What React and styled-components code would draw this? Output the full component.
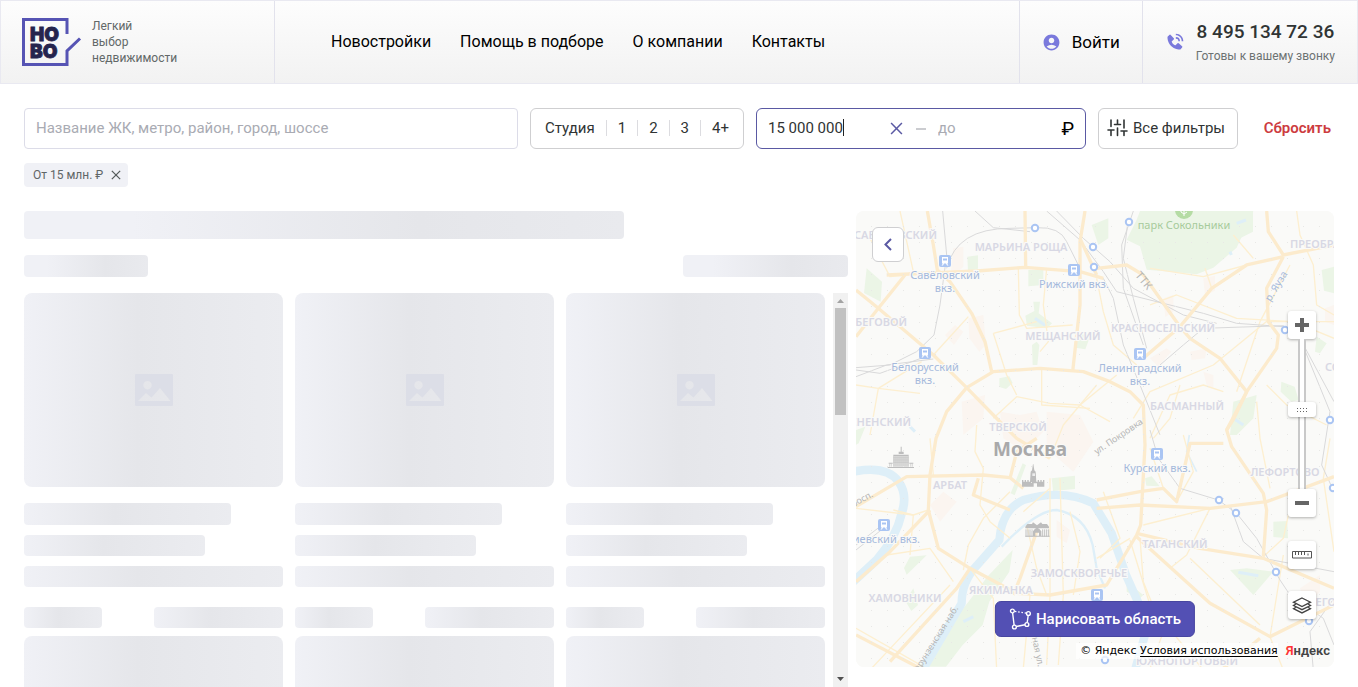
import React, { useState } from "react";
import styled, { createGlobalStyle, css } from "styled-components";
import { MdAccountCircle } from "react-icons/md";
import { BiSolidPhoneCall } from "react-icons/bi";

const Global = createGlobalStyle`
  *, *::before, *::after { box-sizing: border-box; }
  body { margin: 0; background: #fff; color: #303434; font-family: Roboto, "Noto Sans", sans-serif; }
  button, input { font: inherit; color: inherit; }
  button { cursor: pointer; }
`;

const Page = styled.div`
  height: 100vh;
  min-height: 560px;
  display: flex;
  flex-direction: column;
  overflow: hidden;
`;

/* ---------- Header ---------- */

const Header = styled.header`
  flex: none;
  display: flex;
  height: 84px;
  border: 1px solid #e9e9f1;
  background: linear-gradient(#fdfdfd, #f2f2f2);
`;

const Brand = styled.a`
  display: flex;
  align-items: center;
  gap: 10px;
  width: 274px;
  padding-left: 21px;
  border-right: 1px solid #e2e2ec;
  color: #626868;
  font-size: 12px;
  line-height: 16px;
  text-decoration: none;
  svg { flex: none; }
`;

const Nav = styled.nav`
  flex: 1;
  display: flex;
  align-items: center;
  gap: 29px;
  padding: 0 0 1px 56px;
`;

const NavLink = styled.a`
  color: #000;
  font-size: ${(p) => p.$size || 16}px;
  line-height: 20px;
  text-decoration: none;
  white-space: nowrap;
`;

const HeaderCell = styled.div`
  display: flex;
  align-items: center;
  gap: 11px;
  padding: 0 22px;
  border-left: 1px solid #e2e2ec;
  white-space: nowrap;
  svg { flex: none; color: #7a79dc; }
`;

const Phone = styled.div`
  display: flex;
  flex-direction: column;
  align-items: center;
  gap: 5px;
`;

const PhoneNumber = styled.a`
  color: #303434;
  font-size: 19px;
  font-weight: 500;
  line-height: 22px;
  text-decoration: none;
`;

const PhoneNote = styled.span`
  color: #6c7272;
  font-size: 12px;
  line-height: 16px;
`;

/* ---------- Filters ---------- */

const Filters = styled.form`
  flex: none;
  display: flex;
  gap: 12px;
  padding: 24px 24px 0;
  font-size: 15px;
`;

const box = css`
  height: 41px;
  border: 1px solid #cfcfd1;
  border-radius: 6px;
  background: #fff;
`;

const Search = styled.input`
  ${box}
  flex: 1;
  min-width: 120px;
  padding: 0 11px 2px;
  border-color: #dcdce8;
  border-radius: 4px;
  outline: none;
  &::placeholder { color: #a9abb3; opacity: 1; }
`;

const Rooms = styled.fieldset`
  ${box}
  display: flex;
  align-items: center;
  margin: 0;
  padding: 0 3px 2px;
`;

const Room = styled.label`
  padding: 0 11px;
  line-height: 16px;
  cursor: pointer;
  & + & { border-left: 1px solid #dcdce0; }
  input { position: absolute; opacity: 0; width: 1px; height: 1px; }
`;

const Price = styled.div`
  ${box}
  display: flex;
  align-items: center;
  width: 330px;
  padding: 0 11px;
  border-color: #5a59a3;
`;

const FromField = styled.div`
  display: flex;
  align-items: center;
  width: 122px;
  padding-bottom: 2px;
`;

const FromInput = styled.input`
  field-sizing: content;
  padding: 0;
  border: 0;
  outline: none;
  background: none;
  max-width: 112px;
`;

const Caret = styled.span`
  width: 1px;
  height: 17px;
  background: #222;
`;

const ToInput = styled.input`
  flex: 1;
  min-width: 0;
  padding: 0 0 2px;
  border: 0;
  outline: none;
  background: none;
  &::placeholder { color: #a9abb3; opacity: 1; }
`;

const IconButton = styled.button`
  display: flex;
  padding: 0;
  border: 0;
  background: none;
  color: ${(p) => p.$color};
`;

const Dash = styled.span`
  width: 10px;
  height: 2px;
  margin: 0 12px 0 13px;
  background: #cbccd0;
`;

const Ruble = styled.span`
  color: #000;
  font-size: 19px;
  line-height: 20px;
`;

const AllFilters = styled.button`
  ${box}
  display: flex;
  align-items: center;
  gap: 5px;
  width: 140px;
  padding: 0 8px 2px;
  white-space: nowrap;
`;

const Reset = styled.button`
  width: 84px;
  padding: 0 3px 2px;
  border: 0;
  background: none;
  color: #cd3c3f;
  font-weight: 600;
  text-align: right;
`;

const Chips = styled.div`
  flex: none;
  display: flex;
  padding: 14px 24px 0;
`;

const Chip = styled.span`
  display: flex;
  align-items: center;
  gap: 8px;
  height: 24px;
  padding: 0 7px 0 9px;
  border-radius: 4px;
  background: #f0f1f6;
  color: #606666;
  font-size: 12px;
  line-height: 16px;
`;

/* ---------- Results ---------- */

const Content = styled.main`
  flex: 1;
  min-height: 0;
  display: grid;
  grid-template-columns: minmax(0, 824fr) minmax(0, 478fr);
  gap: 8px;
  padding: 24px 24px 0;
`;

const Results = styled.section`
  display: flex;
  flex-direction: column;
  min-height: 0;
`;

const shades = {
  wide: "linear-gradient(90deg, #f0f1f6 18%, #e5e6ea 66%, #e9eaee)",
  card: "linear-gradient(90deg, #f0f1f6, #e5e6ea 44%, #ebecf0)",
};

const Bone = styled.div`
  flex: none;
  width: ${(p) => p.$w};
  height: ${(p) => p.$h}px;
  border-radius: 4px;
  background: ${(p) => shades[p.$shade || "card"]};
`;

const Toolbar = styled.div`
  display: flex;
  justify-content: space-between;
  margin: 16px 0;
`;

const Scroller = styled.div`
  flex: 1;
  min-height: 0;
  display: flex;
  gap: 8px;
`;

const Cards = styled.div`
  flex: 1;
  display: grid;
  grid-template-columns: repeat(3, minmax(0, 1fr));
  gap: 8px 12px;
  overflow-y: auto;
  scrollbar-width: none;
`;

const CardBox = styled.article`
  display: flex;
  flex-direction: column;
  gap: 10px;
`;

const Photo = styled.div`
  display: flex;
  align-items: center;
  justify-content: center;
  height: 194px;
  margin-bottom: 6px;
  border-radius: 8px;
  background: ${shades.card};
`;

const CardFooter = styled.div`
  display: flex;
  justify-content: space-between;
  margin-top: 10px;
`;

const Scrollbar = styled.div`
  display: flex;
  flex-direction: column;
  align-items: center;
  justify-content: space-between;
  width: 15px;
  background: #f1f1f1;
`;

const Arrow = styled.svg`
  display: block;
  width: 15px;
  height: 15px;
`;

const ThumbLane = styled.div`
  flex: 1;
  width: 11px;
  &::before {
    content: "";
    display: block;
    height: 107px;
    background: #c1c1c1;
  }
`;

/* ---------- Map ---------- */

const MapPane = styled.section`
  position: relative;
  margin-bottom: 20px;
  min-height: 0;
  overflow: hidden;
  border-radius: 8px;
  background: #fafaf8;
`;

const MapSvg = styled.svg`
  display: block;
  width: 100%;
  height: 100%;
`;

const Collapse = styled.button`
  position: absolute;
  top: 16px;
  left: 16px;
  display: flex;
  align-items: center;
  justify-content: center;
  width: 32px;
  height: 35px;
  padding: 0;
  border: 1px solid #cfcfd1;
  border-radius: 6px;
  background: #fff;
`;

const Controls = styled.div`
  position: absolute;
  top: 100px;
  right: 18px;
  display: flex;
  flex-direction: column;
  width: 28px;
`;

const MapButton = styled.button`
  display: flex;
  align-items: center;
  justify-content: center;
  width: 28px;
  height: 28px;
  margin-top: ${(p) => p.$top || 0}px;
  padding: 0;
  border: 0;
  border-radius: 3px;
  background: #fff;
  box-shadow: 0 1px 3px rgba(0, 0, 0, 0.3);
`;

const ZoomSlider = styled.input`
  appearance: none;
  writing-mode: vertical-lr;
  direction: rtl;
  width: 28px;
  height: 150px;
  margin: 0;
  background: linear-gradient(90deg, #c9c9c9 2px, #fff 2px, #fff 6px, #c9c9c9 6px) center / 8px 100% no-repeat;
  &::-webkit-slider-thumb {
    appearance: none;
    width: 28px;
    height: 15px;
    border-radius: 3px;
    background:
      repeating-linear-gradient(90deg, #666 0 1px, transparent 1px 3px) center 6px / 10px 1px no-repeat,
      repeating-linear-gradient(90deg, #666 0 1px, transparent 1px 3px) center 9px / 10px 1px no-repeat,
      #fff;
    box-shadow: 0 1px 3px rgba(0, 0, 0, 0.3);
  }
`;

const Draw = styled.button`
  position: absolute;
  bottom: 30px;
  left: 50%;
  transform: translateX(-50%);
  display: flex;
  align-items: center;
  gap: 4px;
  height: 36px;
  padding: 0 13px;
  border: 1px solid #4746a0;
  border-radius: 6px;
  background: #5350b4;
  color: #fff;
  font-size: 15px;
  font-weight: 500;
  white-space: nowrap;
`;

const Copyright = styled.div`
  position: absolute;
  right: 4px;
  bottom: 8px;
  display: flex;
  align-items: center;
  gap: 8px;
  color: #000;
  font: 11px/16px "DejaVu Sans", sans-serif;
  white-space: nowrap;
  a { color: #000; text-underline-offset: 2px; }
`;

const Terms = styled.span`
  padding-left: 4px;
  background: rgba(255, 255, 255, 0.7);
`;

const Yandex = styled.a`
  && { color: #444; }
  font: 600 13px/16px Roboto, sans-serif;
  text-decoration: none;
  b { color: #f33; font-weight: inherit; }
`;

/* ---------- Icons ---------- */

const Logo = () => (
  <svg width="60" height="48" viewBox="0 0 60 48" role="img" aria-label="НОВО">
    <g fill="none" stroke="#5654b4" strokeWidth="3">
      <path d="M45 16V1.500H1.500v45H45V33l13-12.500" />
    </g>
    <g fill="#25244d" stroke="#25244d" strokeWidth="0.800" fontFamily="Inter, sans-serif" fontWeight="900" fontSize="19">
      <text x="8" y="23">НО</text>
      <text x="8" y="40">ВО</text>
    </g>
  </svg>
);

const Cross = ({ size, width }) => (
  <svg width={size} height={size} viewBox="0 0 12 12" fill="none" stroke="currentColor" strokeWidth={width}>
    <path d="M1 1l10 10M11 1L1 11" />
  </svg>
);

const Sliders = () => (
  <svg width="21" height="18" viewBox="0 0 21 18" fill="none" stroke="#303434" strokeWidth="1.6" strokeLinecap="round">
    <path d="M4 1v6.5M1 11h6M4 11v5.5M10.5 1v4.5M7.5 5.5h6M10.5 9v7.500M17 1v8M14 12h6M17 12v4.500" />
  </svg>
);

const Picture = () => (
  <svg width="38" height="32" viewBox="0 0 38 32">
    <path
      fill="#dcdee7"
      fillRule="evenodd"
      d="M1 0h36a1 1 0 0 1 1 1v30a1 1 0 0 1-1 1H1a1 1 0 0 1-1-1V1a1 1 0 0 1 1-1zm2 27h32.500L25 14l-8.500 9.500L11 19zM12.500 7a4.200 4.200 0 1 0 .01 0z"
    />
  </svg>
);

const Polygon = () => (
  <svg width="23" height="22" viewBox="0 0 23 22" fill="none" stroke="#fff" strokeWidth="1.400">
    <circle cx="3.500" cy="3" r="1.900" />
    <circle cx="19.500" cy="5.500" r="1.900" />
    <circle cx="18" cy="16.500" r="1.900" />
    <circle cx="5.500" cy="19" r="1.900" />
    <path d="M3.700 5l1.500 12M19.300 7.500l-1 7M16 16.800l-8.500 1.700" />
    <path d="M6 3.400l11.500 1.800" strokeDasharray="1.500 1.800" />
  </svg>
);

const Ruler = () => (
  <svg width="20" height="8" viewBox="0 0 20 8" fill="none" stroke="#555" strokeWidth="1">
    <path d="M.5.5h19v6.500H.5zM3.500 1v3M6.500 1v3M9.500 1v3M12.500 1v3M16 2.500v2" />
  </svg>
);

const Layers = () => (
  <svg width="20" height="17" viewBox="0 0 20 17" fill="none" stroke="#444" strokeWidth="1.300">
    <path d="M10 1l8.500 4.200L10 9.500 1.500 5.200z" />
    <path d="M4 7L1.500 8.500 10 12.700l8.500-4.200L16 7M4 10.200l-2.500 1.500L10 15.900l8.500-4.200L16 10.200" />
  </svg>
);

/* ---------- Map drawing ---------- */

const parks = [
  "M870 18h340l-50 110-70 60-50 20-60-6-90-8-20-70-40-20 30-60z",
  "M1135 60l20-40h54v60l-55 28z",
  "M50 190l46 40-4 60-50-26z",
  "M352 155l32-4v40l-30 8z",
  "M535 195h45v45l-45 4z",
  "M550 290h20l-4 35 40 30-15 15-60-8-5-30 27-14z",
  "M560 410l8 10-6 60h-14l-2-60z",
  "M690 385l30 10-14 38-30-5z",
  "M448 520l30-6 10 20-20 18-20-6z",
  "M725 60l50-20v60l-30 20z",
  "M1294 530l40 15 12 40-22 5-32-30z",
  "M1150 590l70-20-10 70-50 50h-20z",
  "M1415 195l37-10v80l-30-8z",
  "M1400 395l30 20-20 30-15-5z",
  "M605 820l70-8v40l-66 6z",
  "M518 775l10 6-34 90-12-6z",
  "M180 1055l50-4-60 58-8-20z",
  "M488 1035l-10 65-60 90-20 70-60 60-50 65H232l70-130 50-60 60-80z",
  "M190 1150l14 50-20 18-18-30z",
  "M18 675l28-10-20 50-8 4z",
  "M1140 1095l50-5 80 10-60 70z",
  "M1270 950l42-2 2 52-44-4z",
  "M885 820l20-6 24 30-40-2z",
  "M830 1130l50 40-10 10-40-20z",
];

const blocks = [
  "M310 130l30-5v60l-40 40z", "M355 340l45-10 8 90-20 20-30-40z", "M285 390l30-30 25 20-28 40z",
  "M335 590l70-20-5 70-60 50z", "M450 620l60 10 50-10 20 60-60 60-60-40z", "M1060 220l35-8v45l-30 15z",
  "M900 460l50-30 14 10-40 45z", "M1020 440l50-10-5 30-40 5z", "M590 620l100 10 40 80-60 90-80-70z",
  "M240 900l40-40 40 30-50 60z", "M620 945l40 30-10 40-30-20z", "M1425 310l27-10v60l-27-10z",
  "M1350 1150l60-40v50l-40 40z", "M940 280l30-10v50l-24 16z", "M1060 500l30 10v40l-20-10z",
];

const rivers = [
  { w: 26, d: "M10 800Q110 780 146 830 174 870 155 925 140 995 80 1065L10 1130" },
  { w: 25, d: "M215 1400L335 1195Q335 1130 380 1082L448 1005Q455 915 520 885 640 850 730 895L785 985 828 1110 868 1200 888 1280 855 1395" },
  { w: 7, d: "M455 1025Q560 915 620 915 705 930 728 1020L740 1090 765 1150" },
  { w: 5, d: "M1018 690L1010 740 1040 800" },
  { w: 9, d: "M555 340l32 22M340 1250l30-15M1140 140l4 10M1160 55l28-10M1150 640l30 20M1165 1102l60 10M180 665l15 15" },
];

const majors = [
  "M232 18L250 120 262 195 300 230 365 325 405 410 425 500",
  "M110 210L380 198 525 187 690 200 760 220", "M525 18L527 187", "M705 18L690 110 690 300 668 500",
  "M18 255L85 310 250 450 350 548 430 630 500 700 600 760", "M165 210L85 310 18 395",
  "M690 100L740 210", "M480 820L500 740 560 700",
  "M350 548L290 620 258 700 240 810 235 915 265 1030 360 1090 500 1165 600 1170 770 1140 860 990 872 960 885 720 880 600 840 560 780 530 700 500 570 490 430 500 350 548",
  "M740 190L830 180 880 210 990 365 1020 400 1110 460 1190 560 1152 640 1130 675 1145 725 1240 865 1250 915 1240 1055",
  "M1250 18L1255 80 1300 150 1452 120", "M1300 155L1250 250 1255 350 1285 390 1280 430 1190 560 1130 675",
  "M1300 155L1190 180 1085 250 990 365 885 455", "M740 885L870 860 940 850 980 890 1020 715 1120 715",
  "M740 910L870 900 1080 910 1250 890 1452 815", "M860 985L1050 1030 1240 1060 1452 1150",
  "M860 995L1080 1195 1260 1295 1452 1200", "M18 905L170 815 400 810 480 818 520 850",
  "M385 820L370 870 480 915", "M560 980L510 1120 490 1170", "M360 1090L320 1150 120 1370",
  "M18 1130L120 1040 240 915", "M18 1290L220 1395", "M1230 1300L1120 1390",
];

const minors = [
  "M60 100L120 215 170 210", "M150 18L190 200 165 210", "M505 190L508 330 530 370 668 360", "M590 190L580 300 595 410 570 440",
  "M430 385L470 510 500 570", "M430 385L560 350", "M85 550L215 470", "M18 540L85 550 210 565", "M60 690L85 550",
  "M250 450L355 335", "M575 490L575 600 720 610", "M430 640L500 575 600 595 690 600 780 650", "M690 600L800 510",
  "M740 540L640 660 600 760", "M740 220L760 320 790 420 860 480", "M900 190L1060 215 1190 180",
  "M1065 190L1085 250", "M1150 90L1210 160", "M1340 18L1350 90 1390 180 1400 300 1452 330",
  "M900 300L980 270 1160 340 1330 350 1452 400", "M1255 350L1452 350", "M1255 345L1090 480 900 560 850 640",
  "M990 540L960 640 910 700", "M1160 560L1230 350 1320 180", "M900 700L960 570 1060 540 1120 560",
  "M1250 540L1310 600 1430 660", "M1220 590L1230 700 1260 850", "M1000 690L1030 800 980 890",
  "M880 960L1080 910 1010 1050 960 1090", "M760 860L810 1000 750 1060", "M940 850L900 730",
  "M1020 1060L1230 1260", "M1440 700L1420 820 1452 1040", "M1240 1055L1300 1000 1330 860", "M1300 1050L1260 1295 1300 1395",
  "M380 660L375 740 400 790 390 900 420 950 480 1000", "M480 860L400 940 355 1020 340 1095",
  "M600 820L600 1170 590 1380", "M630 820L640 1170 625 1380", "M250 810L240 700", "M110 1050L240 1030 310 1130",
  "M180 1050L190 930 130 915", "M520 920L600 850", "M530 960L560 1090 590 1170", "M660 920L690 1040 670 1170",
  "M18 1270L220 1385", "M870 1000L880 1130 940 1280 900 1390", "M840 1005L900 1200 1060 1395", "M740 1060L840 1000",
  "M18 910L190 930 235 915", "M360 1090L430 1180 440 1395", "M520 1390L540 1170", "M60 1395L140 1310 300 1140",
];

const rails = [
  "M278 18L290 150 270 300 252 390 200 440 120 480 18 488", "M18 515L110 480 250 462", "M18 495L90 505 240 450",
  "M290 190Q320 70 480 70L560 68Q630 65 650 110L690 190", "M375 18L430 68 540 80",
  "M590 18L690 105 760 200 800 260 1060 325 1160 355 1300 365", "M620 18L700 100 780 170 850 250 1000 330 1100 355",
  "M850 18L815 120 820 250 880 420", "M835 40L820 160 850 280 890 430", "M760 220L790 280 820 420 870 540 930 690",
  "M930 480L1000 420 1060 370 1300 362 1350 400 1452 590", "M1350 400L1440 620 1415 780 1452 860",
  "M900 675L925 760 990 850 1105 885 1160 925 1220 1000 1290 1125 1320 1170", "M1140 900L1180 1010 1240 1060 1452 1100",
  "M1320 1170L1420 1240 1452 1320", "M18 1020L90 965", "M18 1035L100 970", "M1390 1395L1380 1280 1452 1180",
];

const districts = [
  ["САВЁЛОВСКИЙ", 81, 28, "end"], ["МАРЬИНА РОЩА", 165, 40], ["БЕГОВОЙ", 51, 115, "end"], ["МЕЩАНСКИЙ", 207, 129],
  ["КРАСНОСЕЛЬСКИЙ", 307, 121], ["БАСМАННЫЙ", 331, 199], ["ТВЕРСКОЙ", 162, 220], ["ПРЕСНЕНСКИЙ", 55, 215, "end"],
  ["АРБАТ", 94, 278], ["ЛЕФОРТОВО", 429, 265], ["ТАГАНСКИЙ", 319, 337], ["ЗАМОСКВОРЕЧЬЕ", 223, 366],
  ["ЯКИМАНКА", 145, 383], ["ХАМОВНИКИ", 49, 391], ["ЮЖНОПОРТОВЫЙ", 331, 454], ["ПРЕОБРАЖЕНСКОЕ", 434, 37, "start"],
  ["СОКОЛИНАЯ ГОРА", 469, 160, "start"], ["НИЖЕГОРОДСКИЙ", 432, 395, "start"],
];

const stationNames = [
  ["Савёловский", 89, 68], ["вкз.", 89, 81], ["Рижский вкз.", 218, 77], ["Белорусский", 69, 160], ["вкз.", 69, 173],
  ["Ленинградский", 284, 161], ["вкз.", 284, 174], ["Курский вкз.", 301, 261], ["Киевский вкз.", 64, 332, "end"],
];

const stations = [[89, 50], [218, 59], [69, 142], [284, 143], [301, 243], [28, 314], [241, 384]];
const stops = [
  [179, 17], [237, 36], [238, 56], [273, 11], [429, 119], [474, 209], [363, 289], [380, 302], [420, 361], [453, 410], [477, 277], [249, 449],
];

const Paths = ({ list, ...rest }) => (
  <g {...rest}>{list.map((d) => <path key={d} d={d} />)}</g>
);

const Labels = ({ list, ...rest }) => (
  <g textAnchor="middle" paintOrder="stroke" stroke="#fafaf8" strokeWidth="2" {...rest}>
    {list.map(([t, x, y, anchor], i) => <text key={i} x={x} y={y} textAnchor={anchor}>{t}</text>)}
  </g>
);

const Landmarks = () => (
  <g transform="translate(0 675)" fill="#bdbdbd" stroke="none">
    <path d="M152 50h3v15h-3zM146 65h15v7h-15zM130 74h46v4h-46zM113 111h79v3h-79zM116 98h12v3h-12zM178 98h12v3h-12z" />
    <path d="M132 78v32M138 78v32M144 78v32M150 78v32M156 78v32M162 78v32M168 78v32M174 78v32" stroke="#bdbdbd" strokeWidth="3.500" />
    <path d="M130 83h46M130 90h46M130 97h46" stroke="#c6c6c6" strokeWidth="2" />
    <path d="M119 101v9M124 101v9M182 101v9M187 101v9" stroke="#c6c6c6" strokeWidth="2" />
    <path d="M516 170v-20h4v5h4v-5h4v5h4v-5h4v5h4l2-30 4-4 3-19h1l3 19 4 4 2 30h4v-5h4v5h4v-5h4v5h4v-5h4v20h-22v-10h-10v10z" />
    <path d="M547 130h8v8h-8z" fill="#ededed" />
    <path d="M526 290l6-8h14l3-5 12 9 12-9 4 5h14l6 8v5h-71z" />
    <path d="M528 298v22M534 298v22M540 298v22M546 298v22M578 298v22M584 298v22M590 298v22M596 298v22" stroke="#c2c2c2" strokeWidth="3" />
    <path d="M549 320v-16q12-22 25 0v16h-7v-12h-11v12zM526 317h73v3h-73z" />
  </g>
);

const CityMap = () => (
  <MapSvg viewBox="0 0 478 456" preserveAspectRatio="xMidYMid slice" fontFamily="'Noto Sans', sans-serif" role="img" aria-label="Карта Москвы">
    <defs>
      <pattern id="grid" x="0" y="0" width="16" height="16" patternUnits="userSpaceOnUse">
        <rect x="15" y="15" width="2" height="2" fill="#ededeb" />
        <rect x="15" y="15" width="1" height="1" fill="#e8e8e6" />
      </pattern>
    </defs>
    <rect width="478" height="456" fill="#fafaf8" />
    <g transform="scale(.33333) translate(-18 -18)" fill="none" strokeLinejoin="round">
      <Paths list={blocks} fill="#fbf5f0" />
      <Paths list={parks} fill="#ebf5e6" />
      {rivers.map((r) => <path key={r.d} d={r.d} stroke="#deeff8" strokeWidth={r.w} />)}
      <Paths list={minors} stroke="#fdefd0" strokeWidth="4" />
      <Paths list={rails} stroke="#d9d9da" strokeWidth="3" />
      <Paths list={majors} stroke="#fcebcd" strokeWidth="10" />
      <Landmarks />
    </g>
    <rect width="478" height="456" fill="url(#grid)" />
    <Labels list={districts} fill="#d8d8e4" fontSize="11" fontWeight="600" />
    <Labels list={stationNames} fill="#a5b9dc" fontSize="11" />
    <Labels list={[["парк Сокольники", 328, 18]]} fill="#a7cb9c" fontSize="11" stroke="#ebf5e6" />
    <Labels list={[["Москва", 174, 245]]} fill="#a9a9aa" fontSize="19" fontWeight="700" />
    <g fill="#b5b5b5" fontSize="9" textAnchor="middle">
      <text transform="translate(285 72) rotate(50)" fontSize="11">ТТК</text>
      <text transform="translate(423 77) rotate(-58)" fontSize="10" fill="#a5b9dc">р. Яуза</text>
      <text transform="translate(264 228) rotate(-34)">ул. Покровка</text>
      <text transform="translate(82 430) rotate(-58)">Фрунзенская наб.</text>
      <text transform="translate(5 292) rotate(-28)">просп.</text>
      <text transform="translate(177 432) rotate(78)">Мытная ул.</text>
    </g>
    <circle cx="328" cy="-1" r="9" fill="#b5dca4" />
    <path d="M328 0v5M325 0v1l3 2 3-2" stroke="#fff" fill="none" />
    {stations.map(([x, y]) => (
      <g key={x} transform={`translate(${x} ${y})`}>
        <rect x="-6" y="-6" width="12" height="12" rx="2" fill="#aac5f3" />
        <path fill="#fff" fillRule="evenodd" d="M-3-4h6v6.500h-6zm1 1.500v2h4v-2zM-2 2.500h1l-1 2h-1.500zM2 2.500h-1l1 2h1.500z" />
      </g>
    ))}
    <g fill="#fff" stroke="#aac5f3" strokeWidth="2">
      {stops.map(([x, y]) => <circle key={x} cx={x} cy={y} r="3.200" />)}
    </g>
  </MapSvg>
);

/* ---------- Screen ---------- */

const navItems = ["Новостройки", "Помощь в подборе", "О компании", "Контакты"];
const roomOptions = ["Студия", "1", "2", "3", "4+"];

const Card = () => (
  <CardBox>
    <Photo><Picture /></Photo>
    <Bone $w="80%" $h={22} />
    <Bone $w="70%" $h={21} />
    <Bone $w="100%" $h={21} />
    <CardFooter>
      <Bone $w="30%" $h={21} />
      <Bone $w="50%" $h={21} />
    </CardFooter>
  </CardBox>
);

export default function App() {
  const [from, setFrom] = useState("15 000 000");
  const [zoom, setZoom] = useState(53);
  return (
    <Page>
      <Global />
      <Header>
        <Brand href="#">
          <Logo />
          <span>Легкий<br />выбор<br />недвижимости</span>
        </Brand>
        <Nav>{navItems.map((t) => <NavLink key={t} href="#">{t}</NavLink>)}</Nav>
        <HeaderCell>
          <MdAccountCircle size={19} />
          <NavLink href="#" $size={17}>Войти</NavLink>
        </HeaderCell>
        <HeaderCell>
          <BiSolidPhoneCall size={20} />
          <Phone>
            <PhoneNumber href="tel:84951347236">8 495 134 72 36</PhoneNumber>
            <PhoneNote>Готовы к вашему звонку</PhoneNote>
          </Phone>
        </HeaderCell>
      </Header>

      <Filters onSubmit={(e) => e.preventDefault()}>
        <Search aria-label="Поиск" placeholder="Название ЖК, метро, район, город, шоссе" />
        <Rooms aria-label="Количество комнат">
          {roomOptions.map((t) => <Room key={t}><input type="checkbox" />{t}</Room>)}
        </Rooms>
        <Price>
          <FromField>
            <FromInput aria-label="Цена от" value={from} onChange={(e) => setFrom(e.target.value)} />
            <Caret />
          </FromField>
          <IconButton type="button" $color="#5a59a3" aria-label="Очистить" onClick={() => setFrom("")}>
            <Cross size={13} width={1.4} />
          </IconButton>
          <Dash />
          <ToInput aria-label="Цена до" placeholder="до" />
          <Ruble>₽</Ruble>
        </Price>
        <AllFilters type="button"><Sliders />Все фильтры</AllFilters>
        <Reset type="reset">Сбросить</Reset>
      </Filters>

      <Chips>
        <Chip>
          От 15 млн. ₽
          <IconButton type="button" $color="#555b5b" aria-label="Убрать фильтр"><Cross size={10} width={1.5} /></IconButton>
        </Chip>
      </Chips>

      <Content>
        <Results>
          <Bone $w="600px" $h={28} $shade="wide" />
          <Toolbar>
            <Bone $w="15%" $h={22} $shade="wide" />
            <Bone $w="20%" $h={22} $shade="wide" />
          </Toolbar>
          <Scroller>
            <Cards>{[0, 1, 2, 3, 4, 5].map((n) => <Card key={n} />)}</Cards>
            <Scrollbar aria-hidden="true">
              <Arrow viewBox="0 0 15 15" fill="#a3a3a3"><path d="M4 10l3.500-4 3.500 4z" /></Arrow>
              <ThumbLane />
              <Arrow viewBox="0 0 15 15" fill="#505050"><path d="M4 5l3.500 4L11 5z" /></Arrow>
            </Scrollbar>
          </Scroller>
        </Results>

        <MapPane>
          <CityMap />
          <Collapse aria-label="Свернуть карту">
            <svg width="8" height="13" viewBox="0 0 8 13" fill="none" stroke="#5a59a3" strokeWidth="2"><path d="M7 1L1.500 6.500 7 12" /></svg>
          </Collapse>
          <Controls>
            <MapButton aria-label="Приблизить">
              <svg width="14" height="14" viewBox="0 0 14 14" fill="#666"><path d="M5 0h4v5h5v4H9v5H5V9H0V5h5z" /></svg>
            </MapButton>
            <ZoomSlider type="range" aria-label="Масштаб" value={zoom} onChange={(e) => setZoom(+e.target.value)} />
            <MapButton aria-label="Отдалить">
              <svg width="14" height="4" viewBox="0 0 14 4" fill="#666"><path d="M0 0h14v4H0z" /></svg>
            </MapButton>
            <MapButton $top={24} aria-label="Линейка"><Ruler /></MapButton>
            <MapButton $top={22} aria-label="Слои"><Layers /></MapButton>
          </Controls>
          <Draw><Polygon />Нарисовать область</Draw>
          <Copyright>
            <Terms>© Яндекс <a href="#">Условия использования</a></Terms>
            <Yandex href="#"><b>Я</b>ндекс</Yandex>
          </Copyright>
        </MapPane>
      </Content>
    </Page>
  );
}
